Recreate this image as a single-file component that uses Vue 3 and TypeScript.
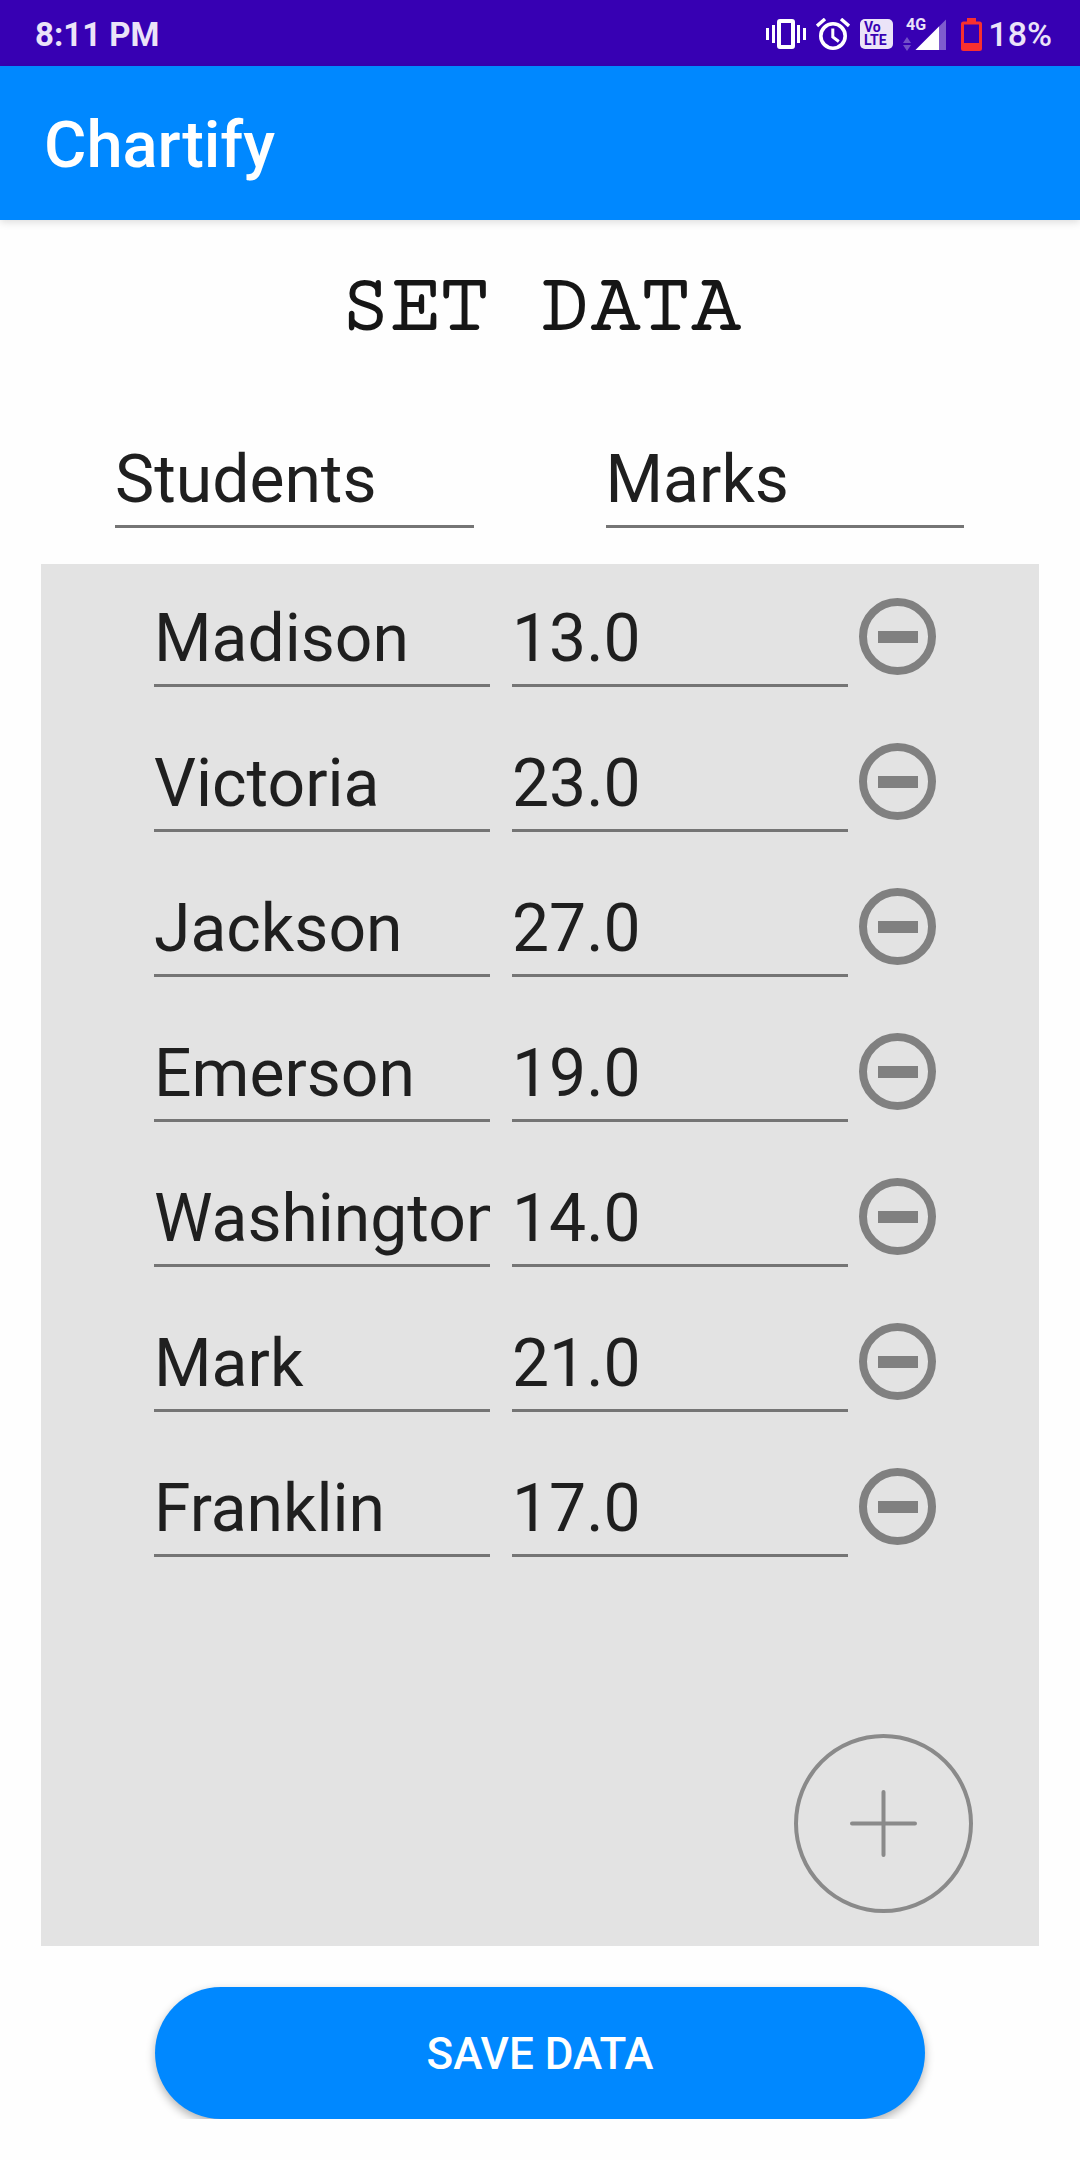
<script setup lang="ts">
import { ref } from 'vue'

interface Entry {
  id: number
  label: string
  value: string
}

const labelHeading = ref('Students')
const valueHeading = ref('Marks')

const entries = ref<Entry[]>([
  { id: 1, label: 'Madison', value: '13.0' },
  { id: 2, label: 'Victoria', value: '23.0' },
  { id: 3, label: 'Jackson', value: '27.0' },
  { id: 4, label: 'Emerson', value: '19.0' },
  { id: 5, label: 'Washington', value: '14.0' },
  { id: 6, label: 'Mark', value: '21.0' },
  { id: 7, label: 'Franklin', value: '17.0' },
])

let nextId = 8

function addEntry(): void {
  entries.value.push({ id: nextId++, label: '', value: '' })
}

function removeEntry(id: number): void {
  entries.value = entries.value.filter((entry) => entry.id !== id)
}
</script>

<template>
  <div class="screen">
    <div class="status">
      <span class="clock">8:11 PM</span>
      <div class="indicators">
        <svg class="vibrate" width="40" height="32" viewBox="0 0 40 32" aria-hidden="true">
          <rect x="13" y="3" width="14" height="26" rx="1" fill="none" stroke="#fff" stroke-width="4" />
          <path d="M1.5 10v12M7.5 7v18M32.5 7v18M38.5 10v12" stroke="#fff" stroke-width="3" />
        </svg>
        <svg class="alarm" width="34" height="32" viewBox="0 0 34 32" aria-hidden="true">
          <circle cx="17" cy="18" r="12.2" fill="none" stroke="#fff" stroke-width="3.6" />
          <path d="M1 8l8-7M33 8l-8-7" stroke="#fff" stroke-width="3.4" />
          <path d="M16.8 10.500v8.500l6 4.500" fill="none" stroke="#fff" stroke-width="3" />
        </svg>
        <svg class="volte" width="33" height="32" viewBox="0 0 33 32" aria-hidden="true">
          <rect y="1" width="33" height="30" rx="5" fill="#ebe3f8" />
          <text x="4" y="14" font-size="14">Vo</text>
          <text x="4" y="27" font-size="14">LTE</text>
        </svg>
        <svg class="signal" width="44" height="44" viewBox="0 -5 44 44" aria-hidden="true">
          <path d="M12.500 33L43 2.500V33z" fill="#fff" opacity=".36" />
          <path d="M12.500 33L36 9.500V33z" fill="#fff" />
          <path d="M0 26l4-6 4 6zM0 28l4 6 4-6z" fill="#7350c8" />
          <text x="3" y="13" font-size="16">4G</text>
        </svg>
        <svg class="battery" width="21" height="33" viewBox="0 0 21 33" aria-hidden="true">
          <path d="M6 0h9v4h-9z" fill="#f9302e" />
          <rect x="1.500" y="5" width="18" height="26.500" rx="1" fill="none" stroke="#f9302e" stroke-width="3" />
          <path d="M2 25h17v6H2z" fill="#f9302e" />
        </svg>
        <span class="percent">18%</span>
      </div>
    </div>

    <header class="app-bar">
      <h1>Chartify</h1>
    </header>

    <main>
      <h2>SET DATA</h2>

      <div class="headings">
        <input v-model="labelHeading" class="field" type="text" aria-label="Label column name" />
        <input v-model="valueHeading" class="field" type="text" aria-label="Value column name" />
      </div>

      <section class="panel">
        <ul>
          <li v-for="entry in entries" :key="entry.id">
            <input v-model="entry.label" class="field" type="text" :aria-label="labelHeading" />
            <input v-model="entry.value" class="field" type="text" inputmode="decimal" :aria-label="valueHeading" />
            <button class="remove" type="button" :aria-label="`Remove ${entry.label}`" @click="removeEntry(entry.id)">
              <svg width="77" height="77" viewBox="0 0 77 77">
                <circle cx="38.500" cy="38.500" r="34.500" fill="none" stroke="#808080" stroke-width="8" />
                <rect x="19" y="33" width="40" height="12" fill="#808080" />
              </svg>
            </button>
          </li>
        </ul>
        <button class="add" type="button" aria-label="Add row" @click="addEntry">
          <svg width="179" height="179" viewBox="0 0 179 179">
            <g fill="none" stroke="#8a8a8a" stroke-width="4" stroke-linecap="round">
              <circle cx="89.500" cy="89.500" r="87.500" />
              <path d="M58 89.500h63M89.500 58v63" />
            </g>
          </svg>
        </button>
      </section>

      <button class="save" type="button">SAVE DATA</button>
    </main>
  </div>
</template>

<style>
body {
  margin: 0;
  background: #fefefe;
}
</style>

<style scoped>
.screen {
  display: flex;
  flex-direction: column;
  min-height: 100vh;
  font-family: Roboto, sans-serif;
  color: #212121;
}

button {
  padding: 0;
  border: 0;
  background: none;
  font-family: inherit;
  cursor: pointer;
}

svg {
  display: block;
  flex: none;
}

.status {
  display: flex;
  align-items: center;
  justify-content: space-between;
  height: 66px;
  padding: 0 28px 0 35px;
  background: #3700b3;
  color: #ebe3f8;
}

.clock {
  padding-top: 2px;
  font-size: 33px;
  font-weight: 700;
}

.indicators {
  display: flex;
  align-items: center;
  padding-top: 2px;
}

.alarm,
.volte,
.signal {
  margin-left: 10px;
}

.battery {
  margin-left: 14px;
}

.volte text {
  fill: #3700b3;
  font-weight: 700;
}

.signal text {
  fill: #ebe3f8;
  font-weight: 700;
}

.percent {
  margin-left: 6px;
  font-size: 34px;
  font-weight: 500;
}

.app-bar {
  display: flex;
  align-items: center;
  height: 154px;
  padding: 0 44px;
  background: #0088ff;
  box-shadow: 0 2px 8px rgba(0, 0, 0, 0.14);
  color: #fff;
}

h1 {
  margin: 0;
  padding-top: 4px;
  font-size: 65px;
  font-weight: 500;
}

main {
  display: flex;
  flex: 1;
  flex-direction: column;
  padding: 41px;
}

h2 {
  margin: 0;
  font-family: "Cutive Mono", "Courier Prime", "Liberation Mono", monospace;
  font-size: 83px;
  font-weight: 400;
  line-height: 90px;
  text-align: center;
  color: #161616;
  -webkit-text-stroke: 2px #161616;
}

.headings {
  display: flex;
  gap: 132px;
  margin: 83px 75px 36px 74px;
}

.field {
  box-sizing: border-box;
  flex: 1;
  min-width: 0;
  height: 94px;
  padding: 0;
  border: 0;
  border-bottom: 3px solid #757575;
  border-radius: 0;
  outline: 0;
  background: none;
  font-family: inherit;
  font-size: 66px;
  color: #1f1f1f;
}

.panel {
  display: flex;
  flex: 1;
  flex-direction: column;
  background: #e3e3e3;
}

ul {
  display: flex;
  flex-direction: column;
  gap: 51px;
  margin: 0;
  padding: 29px 103px 29px 113px;
  list-style: none;
}

li {
  display: flex;
}

li .field + .field {
  margin-left: 22px;
}

.remove {
  display: flex;
  align-items: center;
  height: 87px;
  margin-left: 11px;
}

.add {
  align-self: flex-end;
  margin: auto 66px 33px 0;
  border-radius: 50%;
}

.save {
  height: 132px;
  margin: 41px 114px 0;
  padding-top: 2px;
  border-radius: 66px;
  background: #0088ff;
  box-shadow: 0 4px 10px rgba(0, 0, 0, 0.3);
  clip-path: inset(-20px -20px 0 -20px);
  font-size: 44px;
  font-weight: 500;
  color: #fff;
}
</style>
